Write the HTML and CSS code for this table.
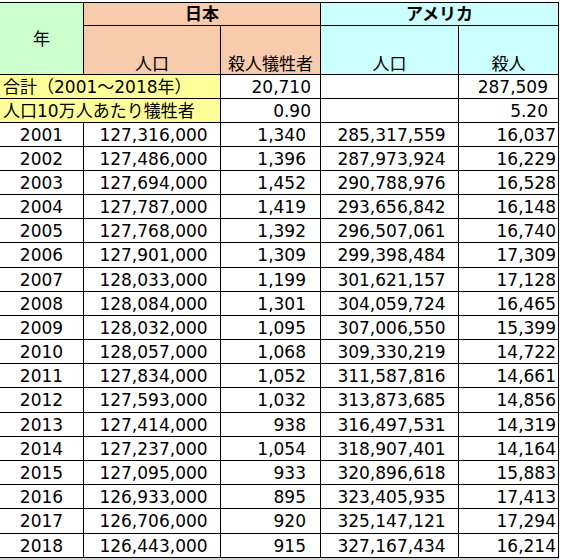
FILE: index.html
```html
<!DOCTYPE html>
<html lang="ja">
<head>
<meta charset="utf-8">
<title>日本とアメリカの殺人犠牲者</title>
<link rel="stylesheet" href="styles.css">
</head>
<body>
<table class="sheet">
  <colgroup>
    <col class="c1"><col class="c2"><col class="c3"><col class="c4"><col class="c5">
  </colgroup>
  <thead>
    <tr class="h1">
      <th rowspan="2" class="year-h first">年</th>
      <th colspan="2" class="jp bold">日本</th>
      <th colspan="2" class="us bold">アメリカ</th>
    </tr>
    <tr class="h2">
      <th class="jp sub">人口</th>
      <th class="jp sub">殺人犠牲者</th>
      <th class="us sub">人口</th>
      <th class="us sub">殺人</th>
    </tr>
  </thead>
  <tbody>
    <tr class="sum">
      <td colspan="2" class="label first">合計（2001～2018年）</td>
      <td class="r s3">20,710</td>
      <td></td>
      <td class="r s5">287,509</td>
    </tr>
    <tr class="sum">
      <td colspan="2" class="label first">人口10万人あたり犠牲者</td>
      <td class="r s3">0.90</td>
      <td></td>
      <td class="r s5">5.20</td>
    </tr>
    <tr><td class="yr first">2001</td><td class="pop">127,316,000</td><td class="r d3">1,340</td><td class="pop us-pop">285,317,559</td><td class="r d5">16,037</td></tr>
    <tr><td class="yr first">2002</td><td class="pop">127,486,000</td><td class="r d3">1,396</td><td class="pop us-pop">287,973,924</td><td class="r d5">16,229</td></tr>
    <tr><td class="yr first">2003</td><td class="pop">127,694,000</td><td class="r d3">1,452</td><td class="pop us-pop">290,788,976</td><td class="r d5">16,528</td></tr>
    <tr><td class="yr first">2004</td><td class="pop">127,787,000</td><td class="r d3">1,419</td><td class="pop us-pop">293,656,842</td><td class="r d5">16,148</td></tr>
    <tr><td class="yr first">2005</td><td class="pop">127,768,000</td><td class="r d3">1,392</td><td class="pop us-pop">296,507,061</td><td class="r d5">16,740</td></tr>
    <tr class="tall"><td class="yr first">2006</td><td class="pop">127,901,000</td><td class="r d3">1,309</td><td class="pop us-pop">299,398,484</td><td class="r d5">17,309</td></tr>
    <tr><td class="yr first">2007</td><td class="pop">128,033,000</td><td class="r d3">1,199</td><td class="pop us-pop">301,621,157</td><td class="r d5">17,128</td></tr>
    <tr><td class="yr first">2008</td><td class="pop">128,084,000</td><td class="r d3">1,301</td><td class="pop us-pop">304,059,724</td><td class="r d5">16,465</td></tr>
    <tr><td class="yr first">2009</td><td class="pop">128,032,000</td><td class="r d3">1,095</td><td class="pop us-pop">307,006,550</td><td class="r d5">15,399</td></tr>
    <tr><td class="yr first">2010</td><td class="pop">128,057,000</td><td class="r d3">1,068</td><td class="pop us-pop">309,330,219</td><td class="r d5">14,722</td></tr>
    <tr><td class="yr first">2011</td><td class="pop">127,834,000</td><td class="r d3">1,052</td><td class="pop us-pop">311,587,816</td><td class="r d5">14,661</td></tr>
    <tr class="tall"><td class="yr first">2012</td><td class="pop">127,593,000</td><td class="r d3">1,032</td><td class="pop us-pop">313,873,685</td><td class="r d5">14,856</td></tr>
    <tr><td class="yr first">2013</td><td class="pop">127,414,000</td><td class="r d3">938</td><td class="pop us-pop">316,497,531</td><td class="r d5">14,319</td></tr>
    <tr><td class="yr first">2014</td><td class="pop">127,237,000</td><td class="r d3">1,054</td><td class="pop us-pop">318,907,401</td><td class="r d5">14,164</td></tr>
    <tr><td class="yr first">2015</td><td class="pop">127,095,000</td><td class="r d3">933</td><td class="pop us-pop">320,896,618</td><td class="r d5">15,883</td></tr>
    <tr><td class="yr first">2016</td><td class="pop">126,933,000</td><td class="r d3">895</td><td class="pop us-pop">323,405,935</td><td class="r d5">17,413</td></tr>
    <tr class="tall"><td class="yr first">2017</td><td class="pop">126,706,000</td><td class="r d3">920</td><td class="pop us-pop">325,147,121</td><td class="r d5">17,294</td></tr>
    <tr><td class="yr first">2018</td><td class="pop">126,443,000</td><td class="r d3">915</td><td class="pop us-pop">327,167,434</td><td class="r d5">16,214</td></tr>
    <tr class="rest"><td class="first"></td><td></td><td></td><td></td><td></td></tr>
  </tbody>
</table>
</body>
</html>
```
FILE: styles.css
```css
html, body {
  margin: 0;
  padding: 0;
  background: #ffffff;
}
body {
  padding-top: 2px;
  font-family: "DejaVu Sans", "Noto Sans CJK JP", sans-serif;
  font-size: 17px;
  color: #000000;
}
.sheet {
  border-collapse: separate;
  border-spacing: 0;
  table-layout: fixed;
  width: 559px;
}
.c1 { width: 84px; }
.c2 { width: 137px; }
.c3 { width: 100px; }
.c4 { width: 138px; }
.c5 { width: 100px; }

.sheet th,
.sheet td {
  box-sizing: border-box;
  padding: 0;
  border-right: 1px solid #000;
  border-bottom: 1px solid #000;
  line-height: 20px;
  white-space: nowrap;
  overflow: hidden;
  font-weight: normal;
  vertical-align: middle;
}
.h1 th {
  border-top: 1px solid #000;
}
.h1 { height: 24px; }
.h2 { height: 49px; }
.sum { height: 24px; }
.sheet tbody tr { height: 24px; }
.sheet tbody tr.tall { height: 25px; }
.sheet tbody tr.rest { height: 8px; }

.year-h {
  background: #ccffcc;
  text-align: center;
}
.jp { background: #f8cbad; }
.us { background: #ccffff; }
.bold {
  font-weight: bold !important;
  text-align: center;
}
.sub {
  text-align: center;
  vertical-align: bottom !important;
}
.label {
  background: #ffff99;
  text-align: left;
  padding-left: 3px !important;
}
.r { text-align: right; }
.s3 { padding-right: 9px !important; }
.s5 { padding-right: 10px !important; }
.d3 { padding-right: 14px !important; }
.d5 { padding-right: 2px !important; }
.yr { text-align: center; }
.pop {
  text-align: center;
  padding-left: 3px !important;
}
.us-pop { padding-left: 4px !important; }
.rest td {
  background: #d0d0d0;
  border-right-color: #d0d0d0;
  border-bottom: none;
}
```
